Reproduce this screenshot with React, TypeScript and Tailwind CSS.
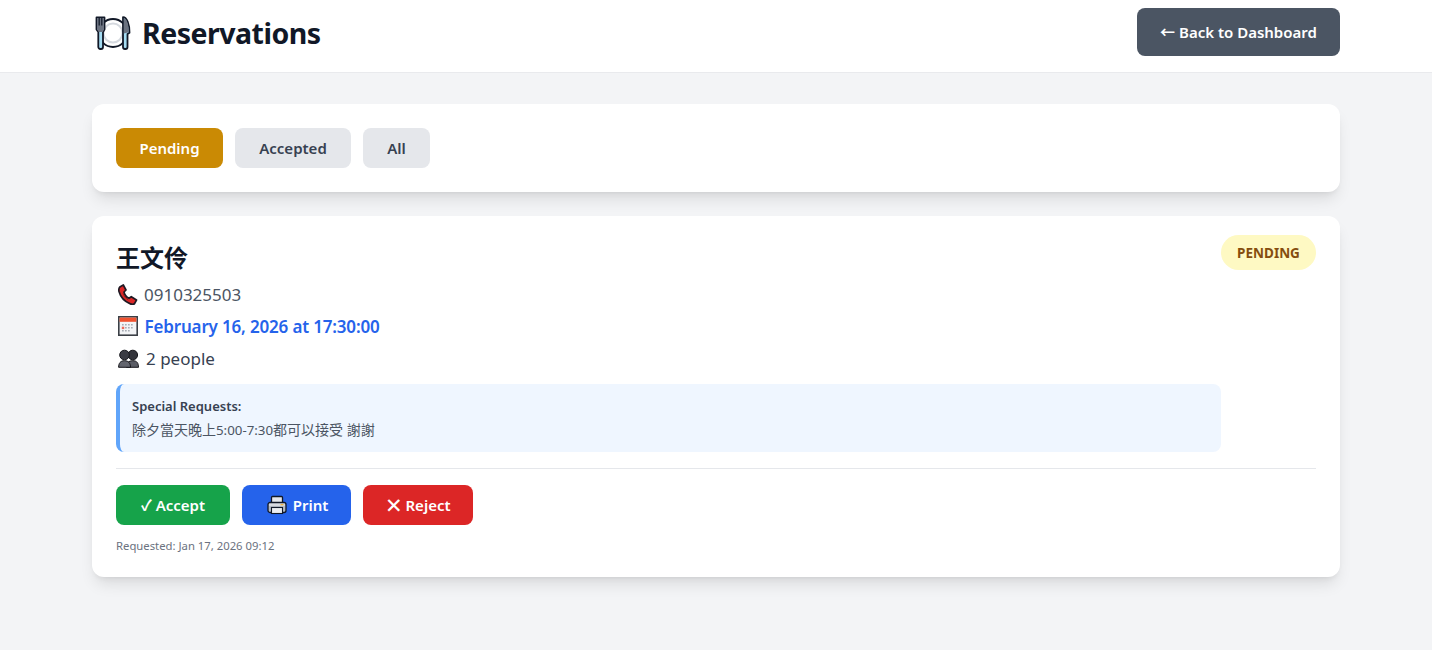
import React from "react";

function Cutlery() {
  return (
    <svg width="36" height="36" viewBox="0 0 36 36" className="shrink-0">
      <circle cx="18" cy="18" r="14" fill="#fff" stroke="#111827" strokeWidth="1.800" />
      <circle cx="18" cy="18" r="9.500" fill="#fff" stroke="#d5d9df" strokeWidth="2" />
      <path d="M1.500 2.500h8v12l-1.500 2.500v15a2 2 0 0 1-2 2h-.7a2 2 0 0 1-2-2V17l-1.800-2.500z" fill="#a5dcf2" stroke="#111827" strokeWidth="1.800" strokeLinejoin="round" />
      <path d="M2 3h7v11.500l-1.300 2.500H3.800L2 14.500z" fill="#6b7280" />
      <path d="M4.200 3v7.500M6.800 3v7.500" stroke="#111827" strokeWidth="1.200" />
      <path d="M28 2.200c4 0 6.500 7 6.500 15.500l-2 1.300v13a2 2 0 0 1-2 2H30a2 2 0 0 1-2-2z" fill="#a5dcf2" stroke="#111827" strokeWidth="1.800" strokeLinejoin="round" />
      <path d="M28.800 3.200c3 0 5 6.500 5 14l-5 1.300z" fill="#6b7280" />
    </svg>
  );
}

function Phone() {
  return (
    <svg width="20" height="21" viewBox="0 0 20 21" className="shrink-0">
      <path d="M1.800 3 5.300 1l2.700 5-2 2c.5 2.800 2.300 5 5 6.300l2.300-1.600 5.200 3.300-1.800 3.400c-.8 1-2.500 1.200-4.300.5C6.500 17.500 2.500 13 1 7.500.6 5.500.9 4 1.800 3z" fill="#dc2626" stroke="#1f1a24" strokeWidth="1.700" strokeLinejoin="round" />
      <path d="M5 9c.8 3 2.500 5.300 5.200 7" fill="none" stroke="#991b1b" strokeWidth="1" />
    </svg>
  );
}

function Calendar() {
  return (
    <svg width="20" height="20" viewBox="0 0 20 20" className="shrink-0">
      <rect x=".8" y=".8" width="18.400" height="18.400" fill="#f3f4f6" stroke="#3b3f46" strokeWidth="1.600" />
      <rect x="1.600" y="1.600" width="16.800" height="4.200" fill="#f0522f" />
      <g fill="#a8adb5">
        <rect x="4" y="8" width="1.700" height="1.500" /><rect x="7" y="8" width="1.700" height="1.500" /><rect x="10" y="8" width="1.700" height="1.500" /><rect x="13" y="8" width="1.700" height="1.500" />
        <rect x="7" y="11" width="1.700" height="1.500" /><rect x="10" y="11" width="1.700" height="1.500" /><rect x="13" y="11" width="1.700" height="1.500" />
        <rect x="4" y="14" width="1.700" height="1.500" /><rect x="7" y="14" width="1.700" height="1.500" /><rect x="10" y="14" width="1.700" height="1.500" />
      </g>
      <rect x="3.800" y="10.700" width="2.400" height="2.400" fill="#ee6a5a" />
    </svg>
  );
}

function People() {
  return (
    <svg width="21" height="19" viewBox="0 0 21 19" className="shrink-0">
      <circle cx="14.800" cy="6" r="4.800" fill="#33343b" stroke="#17171c" />
      <path d="M8.500 18.300c0-4 2-6.600 6.300-6.600s5.700 2.600 5.700 6.600z" fill="#5b5d66" stroke="#17171c" />
      <circle cx="6.500" cy="6" r="4.800" fill="#3a3b43" stroke="#17171c" />
      <path d="M.6 18.300c0-4 1.800-6.600 5.900-6.600s6 2.600 6 6.600z" fill="#63656e" stroke="#17171c" />
    </svg>
  );
}

function Printer() {
  return (
    <svg width="20" height="20" viewBox="0 0 20 20" className="shrink-0">
      <rect x="4.500" y="1.500" width="11" height="7" rx="1" fill="#e5e7eb" stroke="#111827" strokeWidth="1.300" />
      <path d="M3 7.500h14a2 2 0 0 1 2 2v6a2 2 0 0 1-2 2H3a2 2 0 0 1-2-2v-6a2 2 0 0 1 2-2z" fill="#b4bac3" stroke="#111827" strokeWidth="1.300" />
      <rect x="2.200" y="8.700" width="15.600" height="2.200" fill="#d9dce1" />
      <rect x="4.500" y="12.500" width="11" height="6" fill="#eceef1" stroke="#111827" strokeWidth="1.100" />
      <rect x="13.500" y="9" width="3" height="1.300" fill="#f2b544" />
    </svg>
  );
}

export default function App() {
  return (
    <div className="min-h-[650px] bg-[#f3f4f6] font-['Noto_Sans','Noto_Sans_CJK_TC',sans-serif] text-[#111827]">
      <header className="h-[73px] border-b border-[#e9eaed] bg-white">
        <div className="mx-auto flex h-[72px] max-w-[1280px] items-center justify-between px-4 pb-2">
          <div className="flex items-center gap-[11px] pl-[3px] pt-[2px]">
            <Cutlery />
            <h1 className="text-[28.500px] leading-9 font-bold tracking-[-0.5px]">Reservations</h1>
          </div>
          <button className="h-12 w-[203px] rounded-lg bg-[#4b5563] text-[15px] font-semibold text-white">← Back to Dashboard</button>
        </div>
      </header>

      <main className="mx-auto max-w-[1280px] px-4 pt-[31px]">
        <div className="mb-6 flex gap-3 rounded-xl bg-white p-6 shadow-lg">
          <button className="h-10 w-[107px] rounded-lg bg-[#ca8a04] text-[15px] font-semibold text-white">Pending</button>
          <button className="h-10 w-[116px] rounded-lg bg-[#e5e7eb] text-[15px] font-semibold text-[#374151]">Accepted</button>
          <button className="h-10 w-[67px] rounded-lg bg-[#e5e7eb] text-[15px] font-semibold text-[#374151]">All</button>
        </div>

        <div className="rounded-xl bg-white p-6 shadow-lg">
          <div className="flex items-start justify-between">
            <div className="flex-1">
              <h2 className="mb-2 h-8 text-2xl leading-9 font-bold">王文伶</h2>
              <p className="mb-1 flex h-7 items-center gap-[6px] pl-[2px] text-[17px] text-[#4b5563]"><Phone /><span className="pt-[2px]">0910325503</span></p>
              <p className="mb-1 flex h-7 items-center gap-[7px] pl-[1.500px] text-[17px] font-semibold tracking-[-0.17px] text-[#2563eb]"><Calendar /><span className="pt-[2px]">February 16, 2026 at 17:30:00</span></p>
              <p className="flex h-7 items-center gap-[7px] pl-[2px] text-[17px] text-[#374151]"><People /><span className="pt-[2px]">2 people</span></p>
              <div className="mt-3 rounded-lg border-l-4 border-[#60a5fa] bg-[#eff6ff] p-3 text-[13px] leading-5 text-[#374151]">
                <p className="mb-1 font-semibold">Special Requests:</p>
                <p className="text-sm text-[#4b5563]">除夕當天晚上<span className="text-[13.300px]">5:00-7:30</span>都可以接受 謝謝</p>
              </div>
            </div>
            <span className="-mt-[5px] flex h-[35px] w-[95px] items-center justify-center rounded-full bg-[#fef9c3] pt-[2px] text-[13.500px] font-bold text-[#854d0e]">PENDING</span>
          </div>
          <div className="mt-4 flex gap-3 border-t border-[#e5e7eb] pt-4">
            <button className="h-10 w-[114px] rounded-lg bg-[#16a34a] text-[15px] font-semibold text-white">✓ Accept</button>
            <button className="flex h-10 w-[109px] items-center justify-center gap-[6px] rounded-lg bg-[#2563eb] pl-[2px] text-[15px] font-semibold text-white"><Printer />Print</button>
            <button className="flex h-10 w-[110px] items-center justify-center gap-[2px] rounded-lg bg-[#dc2626] text-[15px] font-semibold text-white">
              <span className="text-[21px] leading-none font-normal">✕</span>Reject
            </button>
          </div>
          <p className="mt-3 h-4 text-[11.300px] leading-[18px] text-[#6b7280]">Requested: Jan 17, 2026 09:12</p>
        </div>
      </main>
    </div>
  );
}
